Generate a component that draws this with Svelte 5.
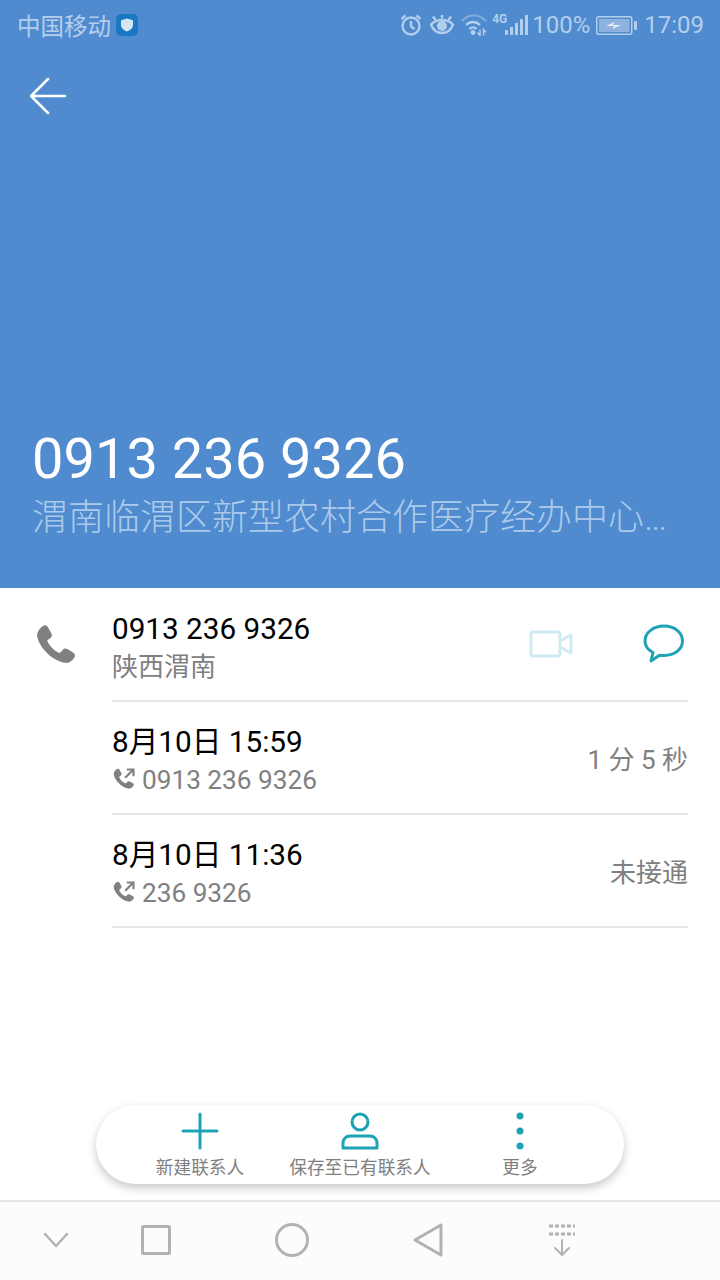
<script lang="ts">
  const calls = [
    { when: '8月10日 15:59', num: '0913 236 9326', note: '1 分 5 秒' },
    { when: '8月10日 11:36', num: '236 9326', note: '未接通' },
  ];
  const phonePath = 'M7 2.5c1-.8 2.3-.6 3 .6l2.4 4.2c.6 1 .3 2.2-.6 2.9l-1.6 1.2c-.4.3-.5.8-.3 1.2 1.5 3 4 5.5 7.2 7 .4.2.9.1 1.2-.3l1.3-1.5c.7-.9 2-1.1 3-.5l3.8 2.3c1.2.7 1.4 2.3.5 3.3-1.2 1.4-3 3.300-5.300 3.100C13 25.200 4 15.500 3.300 8.700 3.100 6 5.300 3.800 7 2.500z';
</script>

<div class="screen">
  <header class="hero">
    <div class="status">
      <div class="carrier">
        <span>中国移动</span>
        <svg class="shield" viewBox="0 0 22 22">
          <rect width="22" height="22" rx="5" fill="#1a78c2" />
          <path d="M11 4.500l6 1.800v4.500c0 3.200-2.500 5.500-6 6.700-3.500-1.200-6-3.500-6-6.700V6.300z" fill="#d4e6f5" />
        </svg>
      </div>
      <div class="indicators">
        <svg class="alarm" width="22" height="22" viewBox="0 0 22 22" fill="none" stroke="#b4cfec" stroke-width="2.400">
          <circle cx="11" cy="12" r="8.500" />
          <path d="M11 7v5.500l3.500 2.500M1.500 5l4-3.500M20.500 5l-4-3.500" />
        </svg>
        <svg class="eye" width="24" height="20" viewBox="0 0 24 20" fill="none" stroke="#b4cfec" stroke-width="2.400">
          <path d="M1 9.500c6-6 16-6 22 0-2 5.500-6 8.500-11 8.500S3 15 1 9.500z" />
          <circle cx="12" cy="11" r="3.800" fill="#b4cfec" />
          <path d="M3 1.500l2.500 3.500M12 0v3.500M21 1.500L18.500 5" />
        </svg>
        <svg class="wifi" width="26" height="22" viewBox="0 0 26 22" fill="none" stroke="#b4cfec" stroke-width="2.400">
          <path d="M1 7c7-7.500 17-7.500 24 0" opacity=".5" />
          <path d="M5 11c4-4 10-4 14 0M8.500 15c2-2 5-2 7 0" />
          <circle cx="12" cy="18.500" r="2.400" fill="#b4cfec" stroke="none" />
          <path d="M19 15.500v6l-2.500-3M22.500 21.500v-6l2.500 3" stroke-width="1.400" />
        </svg>
        <div class="signal">
          <span class="net">4G</span>
          <svg width="24" height="20" viewBox="0 0 24 20" fill="#b4cfec">
            <rect x="0" y="15" width="3" height="5" rx="1" />
            <rect x="5" y="12" width="3" height="8" />
            <rect x="10" y="8" width="3" height="12" />
            <rect x="15" y="4" width="3" height="16" />
            <rect x="20" y="0" width="3" height="20" />
          </svg>
        </div>
        <span class="pct">100%</span>
        <svg class="batt" width="41" height="19" viewBox="0 0 41 19">
          <rect x=".75" y=".75" width="35" height="17.500" rx="2" fill="none" stroke="#b4cfec" stroke-width="1.500" />
          <rect x="3" y="3" width="30.500" height="13" fill="#8db2dd" />
          <path d="M10 10l8.500-4-1.500 3h8l-8.500 4 1.500-3z" fill="#e6f0fa" />
          <rect x="38" y="5" width="3" height="9" rx="1" fill="#b4cfec" />
        </svg>
        <span class="clock">17:09</span>
      </div>
    </div>
    <button class="back" aria-label="返回">
      <svg width="38" height="38" viewBox="0 0 38 38" fill="none" stroke="#fff" stroke-width="2.500" stroke-linecap="round" stroke-linejoin="round">
        <path d="M1 19h34M18 2L1 19l17 17" />
      </svg>
    </button>
    <div class="title">
      <h1>0913 236 9326</h1>
      <p>渭南临渭区新型农村合作医疗经办中心…</p>
    </div>
  </header>

  <main class="content">
    <section class="row first">
      <div class="lead">
        <svg width="47" height="47" viewBox="0 0 30 30" fill="#808080"><path d={phonePath} /></svg>
      </div>
      <div class="body divider">
        <div class="text">
          <div class="primary">0913 236 9326</div>
          <div class="secondary">陕西渭南</div>
        </div>
        <div class="actions">
          <svg width="44" height="30" viewBox="0 0 44 30" fill="none" stroke="#cdebf0" stroke-width="3" stroke-linejoin="round">
            <rect x="2" y="3" width="29" height="24" rx="2" />
            <path d="M31 12l11-6v18l-11-6" />
          </svg>
          <svg width="42" height="40" viewBox="0 0 42 40" fill="none" stroke="#1ea2b5" stroke-width="3" stroke-linejoin="round">
            <path d="M21 2c10.500 0 18.500 6.500 18.500 15S31.500 31.500 21 31.500c-1.500 0-3 0-4.500-.3L8 37l2-8.500C5 26 2 22 2 17 2 8.500 10.500 2 21 2z" />
          </svg>
        </div>
      </div>
    </section>

    {#each calls as c}
      <section class="row">
        <div class="lead"></div>
        <div class="body divider">
          <div class="text">
            <div class="primary">{c.when}</div>
            <div class="secondary num">
              <svg width="25" height="25" viewBox="0 0 30 30" fill="#808080">
                <path d={phonePath} />
                <path d="M17 13L26 4M19 3h8v8" fill="none" stroke="#808080" stroke-width="2.600" />
              </svg>
              <span>{c.num}</span>
            </div>
          </div>
          <div class="note">{c.note}</div>
        </div>
      </section>
    {/each}
  </main>

  <div class="pill-wrap">
    <div class="pill">
      <div class="pill-item">
        <svg width="38" height="38" viewBox="0 0 38 38" stroke="#1ea2b5" stroke-width="3" fill="none" stroke-linecap="round">
          <path d="M19 2v34M2 19h34" />
        </svg>
        <span>新建联系人</span>
      </div>
      <div class="pill-item">
        <svg width="38" height="38" viewBox="0 0 38 38" stroke="#1ea2b5" stroke-width="3" fill="none" stroke-linejoin="round">
          <circle cx="19" cy="10" r="8" />
          <path d="M9 24h20c4 0 7 3 7 7v5H2v-5c0-4 3-7 7-7z" />
        </svg>
        <span>保存至已有联系人</span>
      </div>
      <div class="pill-item">
        <svg width="38" height="38" viewBox="0 0 38 38" fill="#1ea2b5">
          <circle cx="19" cy="4" r="3.500" />
          <circle cx="19" cy="19" r="3.500" />
          <circle cx="19" cy="34" r="3.500" />
        </svg>
        <span>更多</span>
      </div>
    </div>
  </div>

  <nav class="navbar">
    <svg class="chev" width="26" height="16" viewBox="0 0 26 16" fill="none" stroke="#b2b2b2" stroke-width="2.500" stroke-linecap="round" stroke-linejoin="round">
      <path d="M2 2l11 12L24 2" />
    </svg>
    <svg width="30" height="30" viewBox="0 0 30 30" fill="none" stroke="#b2b2b2" stroke-width="3" stroke-linejoin="round">
      <rect x="1.500" y="1.500" width="27" height="27" rx="1" />
    </svg>
    <svg width="34" height="34" viewBox="0 0 34 34" fill="none" stroke="#b2b2b2" stroke-width="3">
      <circle cx="17" cy="17" r="15.500" />
    </svg>
    <svg width="30" height="34" viewBox="0 0 30 34" fill="none" stroke="#b2b2b2" stroke-width="3" stroke-linejoin="round">
      <path d="M28 2v30L2 17z" />
    </svg>
    <svg width="30" height="34" viewBox="0 0 30 34" fill="none" stroke="#b2b2b2" stroke-width="2.500" stroke-linecap="round">
      <path d="M2 3h26M2 11h26" stroke-dasharray="4 2" stroke-linecap="butt" stroke-width="3" />
      <path d="M15 17v15M8 25l7 7 7-7" stroke-linejoin="round" stroke-width="2" />
    </svg>
  </nav>
</div>

<style>
  :global(body) {
    margin: 0;
    background: #fff;
  }

  .screen {
    width: 720px;
    height: 1280px;
    display: flex;
    flex-direction: column;
    font-family: Roboto, "Noto Sans CJK SC", sans-serif;
    overflow: hidden;
  }

  .hero {
    height: 588px;
    flex-shrink: 0;
    background: #4f8bce;
    display: flex;
    flex-direction: column;
    color: #fff;
  }

  .status {
    height: 50px;
    display: flex;
    align-items: center;
    justify-content: space-between;
    padding: 0 16px 0 17px;
    color: #b4cfec;
    font-size: 24px;
  }

  .carrier,
  .indicators {
    display: flex;
    align-items: center;
  }

  .carrier { gap: 5px; font-size: 23.5px; }
  .shield { width: 22px; height: 22px; }

  .alarm { margin-right: 8px; }
  .eye { margin-right: 7px; }
  .wifi { margin-right: 18px; }
  .signal { position: relative; margin-right: 3px; }
  .signal svg { display: block; }
  .net {
    position: absolute;
    left: -13px;
    top: -3px;
    font-size: 12px;
    font-weight: 700;
  }
  .batt { margin: 0 7px 0 6px; }

  .back {
    width: 38px;
    height: 38px;
    margin: 27px 0 0 30px;
    padding: 0;
    border: none;
    background: none;
  }
  .back svg { display: block; }

  .title {
    margin-top: auto;
    padding: 0 32px 44px;
  }

  h1 {
    margin: 0;
    font-size: 56px;
    font-weight: 400;
    line-height: 66px;
  }

  .title p {
    margin: 0;
    font-size: 36px;
    font-weight: 300;
    line-height: 52px;
    white-space: nowrap;
    color: #abcaeb;
  }

  .content { flex: 1; }

  .row {
    display: flex;
    height: 113px;
  }
  .row.first { height: 114px; }

  .lead {
    width: 112px;
    flex-shrink: 0;
    padding: 34px 0 0 32px;
    box-sizing: border-box;
  }
  .row:not(.first) .lead { padding: 0; }

  .body {
    flex: 1;
    margin-right: 32px;
    display: flex;
    align-items: center;
    justify-content: space-between;
    border-bottom: 2px solid #e6e6e6;
    box-sizing: border-box;
  }

  .text { padding-top: 4px; }
  .first .text { padding-top: 6px; }

  .primary {
    font-size: 29.7px;
    line-height: 40px;
    color: #000;
  }

  .secondary {
    font-size: 26px;
    line-height: 36px;
    color: #808080;
  }

  .num {
    display: flex;
    align-items: center;
    gap: 6px;
    margin-left: -1px;
    font-size: 26.2px;
  }

  .actions {
    display: flex;
    align-items: center;
    gap: 70px;
    margin-right: 3px;
  }

  .note {
    font-size: 26px;
    color: #808080;
  }

  .pill-wrap {
    display: flex;
    justify-content: center;
    padding-bottom: 16px;
  }

  .pill {
    width: 528px;
    height: 79px;
    box-sizing: border-box;
    border-radius: 40px;
    background: #fff;
    box-shadow: 0 4px 10px rgba(0, 0, 0, 0.22);
    display: flex;
    justify-content: center;
    padding-top: 7px;
  }

  .pill-item {
    width: 160px;
    display: flex;
    flex-direction: column;
    align-items: center;
    gap: 3px;
    font-size: 17.7px;
    color: #808080;
    white-space: nowrap;
  }

  .navbar {
    height: 80px;
    box-sizing: border-box;
    background: #fcfcfc;
    border-top: 2px solid #e6e6e6;
    display: flex;
    align-items: center;
    gap: 104px;
    padding: 0 0 2px 43px;
  }
  .chev { margin-right: -32px; }
</style>
